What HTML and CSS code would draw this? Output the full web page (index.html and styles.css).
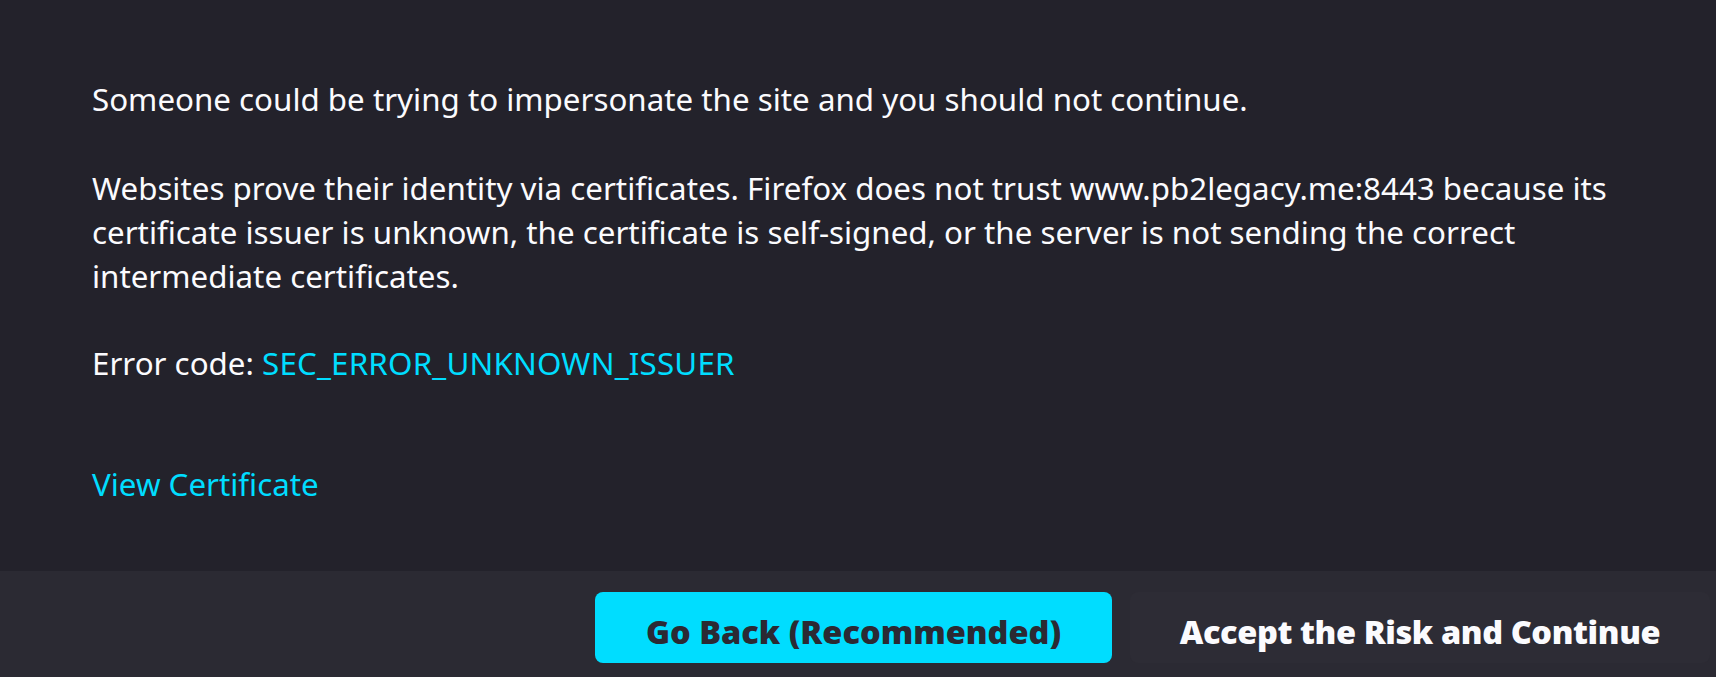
FILE: index.html
```html
<!DOCTYPE html>
<html lang="en">
<head>
    <meta charset="UTF-8">
    <meta name="viewport" content="width=device-width, initial-scale=1.0">
    <title>Warning: Potential Security Risk Ahead</title>
    <link rel="stylesheet" href="styles.css">
</head>
<body>

    <!-- Error details -->
    <main class="container">
        <p class="intro">Someone could be trying to impersonate the site and you should not continue.</p>
        <p>Websites prove their identity via certificates. Firefox does not trust www.pb2legacy.me:8443 because its certificate issuer is unknown, the certificate is self-signed, or the server is not sending the correct intermediate certificates.</p>
        <p>Error code: <a href="#" class="error-code">SEC_ERROR_UNKNOWN_ISSUER</a></p>
        <a href="#" class="view-cert">View Certificate</a>
    </main>

    <!-- Button bar -->
    <div class="button-bar">
        <button class="primary">Go Back (Recommended)</button>
        <button class="secondary">Accept the Risk and Continue</button>
    </div>

</body>
</html>
```

FILE: styles.css
```css
/* Reset basic elements */
body, html {
    margin: 0;
    padding: 0;
    height: 100%;
    overflow: hidden;
}

body {
    display: flex;
    flex-direction: column;
    background-color: #23222b;
    color: #fbfbfe;
    font-family: 'Noto Sans', 'Open Sans', sans-serif;
    font-size: 31.3px;
    line-height: 44px;
}

/* Main container */
.container {
    width: 1540px;
    padding: 77px 0 0 92px;
}

.container p {
    margin: 0 0 43.5px 0;
}

.container p.intro {
    margin-bottom: 44.5px;
}

a {
    color: #00ddff;
    text-decoration: none;
}

.error-code {
    letter-spacing: 0.2px;
}

.view-cert {
    display: inline-block;
    margin-top: 33.5px;
    margin-bottom: 65px;
}

/* Button bar */
.button-bar {
    flex: 1;
    background-color: #2b2a33;
    display: flex;
    justify-content: flex-end;
    align-items: flex-start;
    gap: 18px;
    padding: 21px 6px 0 0;
}

button {
    box-sizing: border-box;
    height: 71px;
    padding: 8px 0 0 0;
    border: none;
    border-radius: 8px;
    font-family: 'Noto Sans', 'Open Sans', sans-serif;
    font-size: 32.5px;
    font-weight: 900;
    cursor: pointer;
}

button.primary {
    width: 517px;
    background-color: #00ddff;
    color: #2b2a33;
}

button.secondary {
    width: 580px;
    background-color: #2d2c35;
    color: #fbfbfe;
    letter-spacing: -0.4px;
}
```
